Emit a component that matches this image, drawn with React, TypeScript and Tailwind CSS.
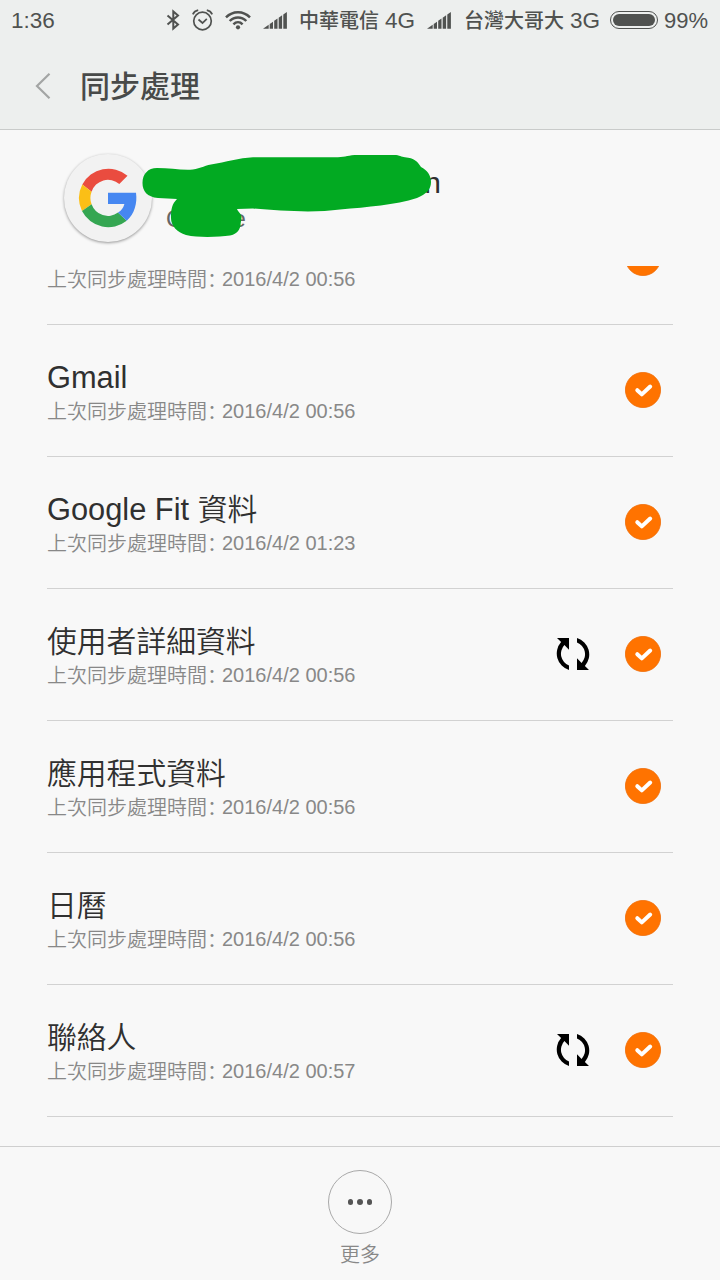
import React from "react";

type SyncItem = {
  title: string;
  time: string;
  syncing?: boolean;
};

const items: SyncItem[] = [
  { title: "Drive", time: "2016/4/2 00:56" },
  { title: "Gmail", time: "2016/4/2 00:56" },
  { title: "Google Fit 資料", time: "2016/4/2 01:23" },
  { title: "使用者詳細資料", time: "2016/4/2 00:56", syncing: true },
  { title: "應用程式資料", time: "2016/4/2 00:56" },
  { title: "日曆", time: "2016/4/2 00:56" },
  { title: "聯絡人", time: "2016/4/2 00:57", syncing: true },
];

const BluetoothIcon = () => (
  <svg width="14" height="22" viewBox="0 0 14 22" fill="none" stroke="#505250" strokeWidth="2">
    <path d="M1.5 6.5 L12 15.5 L7.3 19.5 V2.5 L12 6.5 L1.5 15.5" />
  </svg>
);

const AlarmIcon = () => (
  <svg width="21" height="22" viewBox="0 0 21 22" fill="none" stroke="#505250">
    <circle cx="10.5" cy="12" r="8.8" strokeWidth="1.7" />
    <path d="M6.5 10.5 L10.5 14 L14.8 9.8" strokeWidth="1.7" />
    <path d="M0.8 5.4 C1.8 3.2 3.8 1.7 6.2 1.2 M20.2 5.4 C19.2 3.2 17.2 1.7 14.8 1.2" strokeWidth="1.8" />
  </svg>
);

const WifiIcon = () => (
  <svg width="26" height="20" viewBox="0 0 26 20" fill="none" stroke="#505250" strokeWidth="2.5">
    <path d="M1 7.3 C7.8 0.4 18.2 0.4 25 7.3" />
    <path d="M4.7 11 C9.4 6.2 16.6 6.2 21.3 11" />
    <path d="M8.4 14.3 C11.1 11.6 14.9 11.6 17.6 14.3" />
    <circle cx="13" cy="17.3" r="2.1" fill="#505250" stroke="none" />
  </svg>
);

const SignalIcon = () => (
  <svg width="25" height="18" viewBox="0 0 25 18" fill="#505250">
    <path d="M0 17.8 L5.7 13.7 V17.8 Z" />
    <path d="M6.7 13 L10 10.7 V17.8 H6.7 Z" />
    <path d="M11.2 9.8 L14.5 7.5 V17.8 H11.2 Z" />
    <path d="M15.7 6.7 L19.1 4.3 V17.8 H15.7 Z" />
    <path d="M20.3 3.5 L23.9 1 V17.8 H20.3 Z" />
  </svg>
);

const GoogleLogo = () => (
  <svg width="60" height="60" viewBox="78 168 60 60">
    <path fill="#ea4c3f" d="M82.3 184.6 A29.5 29.5 0 0 1 127.5 175.7 L119.3 184 A17.2 17.2 0 0 0 91.6 191.7 Z" />
    <path fill="#fbbf16" d="M82.3 184.6 L91.6 191.7 A17.2 17.2 0 0 0 91.6 204.2 L82 211 A29.5 29.5 0 0 1 82.3 184.6 Z" />
    <path fill="#35a652" d="M82 211 L91.6 204.2 A17.2 17.2 0 0 0 118 212.6 L126.7 220.8 A29.5 29.5 0 0 1 82 211 Z" />
    <path fill="#4687f1" d="M126.7 220.8 L118 212.6 Q123 209.5 124.4 204 H108 V192.7 H136 C137.5 203 134.5 214 126.7 220.8 Z" />
  </svg>
);

const SyncIcon = () => (
  <svg width="36" height="36" viewBox="0 0 36 36" fill="#000">
    <path d="M14 34 A17.2 17.2 0 0 1 6.1 6.1 L2 2 H14 V13.7 L9.4 9.1 A12.6 12.6 0 0 0 14 29.5 Z" />
    <path d="M22 2 A17.2 17.2 0 0 1 29.9 29.9 L34 34 H22 V22.3 L26.6 26.9 A12.6 12.6 0 0 0 22 6.5 Z" />
  </svg>
);

const CheckIcon = () => (
  <svg width="36" height="36" viewBox="0 0 36 36" fill="none">
    <circle cx="18" cy="18" r="17.6" fill="#ff7300" stroke="#f06c05" strokeWidth="0.8" />
    <path d="M12.3 18.2 L16.8 22.4 L25.2 14.5" stroke="#fff" strokeWidth="4" strokeLinecap="round" strokeLinejoin="round" />
  </svg>
);

const StatusBar = () => (
  <div className="flex h-10 items-center pl-[11px] pr-3 text-[22.5px] text-[#505250]">
    <span className="mr-auto mt-px">1:36</span>
    <div className="flex items-center gap-3">
      <BluetoothIcon />
      <AlarmIcon />
      <WifiIcon />
      <SignalIcon />
      <span className="mt-px flex w-[115px] items-center justify-between whitespace-nowrap">
        <span className="-ml-px text-xl font-medium">中華電信</span>
        <span>4G</span>
      </span>
      <SignalIcon />
      <span className="mt-px flex w-[136px] items-center justify-between whitespace-nowrap">
        <span className="text-xl font-medium">台灣大哥大</span>
        <span>3G</span>
      </span>
    </div>
    <div className="ml-2.5 h-[18px] w-12 rounded-full border border-[#505250] p-[2px]">
      <div className="h-full rounded-full bg-[#505250]" />
    </div>
    <span className="ml-1.5 w-[44px] whitespace-nowrap text-[22px]">99%</span>
  </div>
);

const Account = () => (
  <div className="relative flex h-[136px] items-start pl-16 pt-6">
    <div className="flex size-[88px] items-center justify-center rounded-full bg-[#f2f2f2] shadow-[0_1px_3px_rgba(0,0,0,0.4)]">
      <GoogleLogo />
    </div>
    <div className="ml-[14px] w-[275px]">
      <div className="mt-[9px] text-right text-[30px] leading-10 text-[#303030]">n</div>
      <div className="text-2xl leading-8 tracking-[0.5px] text-[#666]">Google</div>
    </div>
    <svg className="absolute left-[140px] top-[20px]" width="300" height="90" viewBox="140 150 300 90">
      <path
        fill="#02aa22"
        d="M157 168 C169 168 179 170 190 169.700 C198 169.500 204 166 211 164.600 C226 162 239 158 253 157.300 L338 157.300 C346 157 348 155 358 155 L394 155 C400 155 401 157 405 157.300 C414 158 418 162 421 167 C427 170 431 175 431 182 C431 190 426 194 417 198 C395 205 368 207 340 209.500 C315 213 281 211 253 208.500 L237 209 C238 212 241 213 241.500 217 C241.500 220 240.500 222 240.500 226 C239 231 236 234.500 230 235.500 C219 237 199 238 186 235 C177 232 171 226 171 218 C171 209 172 204 177 199 L158 198 C147 197 142.500 191 142.500 183 C142.500 174 148 168 157 168 Z"
      />
    </svg>
  </div>
);

const SyncRow: React.FC<{ item: SyncItem }> = ({ item }) => (
  <div className="flex h-[132px] items-center border-b border-[#d2d2d2] pb-px pr-3">
    <div className="mt-[3px] flex-1 whitespace-nowrap">
      <div className="h-[38px] text-[29.8px] leading-[38px] text-[#303030]">
        {item.title.split(/([\x20-\x7e]+)/).map((part, i) => (
          <span key={i} className={i % 2 ? "text-[30.8px]" : ""}>
            {part}
          </span>
        ))}
      </div>
      <div className="flex h-7 text-xl leading-7 text-[#888]">
        <span className="mt-px">上次同步處理時間</span>
        <span className="w-[15px] font-['Noto_Sans_CJK_SC',sans-serif] tracking-[-5px]" lang="zh-CN">
          ：
        </span>
        <span>{item.time}</span>
      </div>
    </div>
    {item.syncing && (
      <div className="mr-[34px]">
        <SyncIcon />
      </div>
    )}
    <CheckIcon />
  </div>
);

const App = () => {
  return (
    <div
      lang="zh-TW"
      className="flex h-[1280px] w-[720px] flex-col overflow-hidden bg-[#f8f8f8] font-['Liberation_Sans','Noto_Sans_CJK_TC',sans-serif] font-[350]"
    >
      {/* header */}
      <header className="h-[130px] border-b border-[#c9cbca] bg-[#edefee]">
        <StatusBar />
        <div className="flex h-[92px] items-center pl-[35px]">
          <svg width="16" height="26" viewBox="0 0 16 26" fill="none" stroke="#a3a5a4" strokeWidth="2.2">
            <path d="M14.5 0.8 L2 13 L14.5 25.2" />
          </svg>
          <h1 className="ml-[29px] text-[30px] font-medium text-[#484a49]">同步處理</h1>
        </div>
      </header>

      <Account />

      {/* list, scrolled part way through its first row */}
      <main className="h-[880px] overflow-hidden px-[47px]">
        <div className="-mt-[73px]">
          {items.map((item) => (
            <SyncRow key={item.title} item={item} />
          ))}
        </div>
      </main>

      {/* footer */}
      <footer className="flex h-[134px] flex-col items-center border-t border-[#cfcfcf] pt-[23px]">
        <button className="flex size-16 items-center justify-center gap-1 rounded-full border border-[#a9a9a9]">
          <span className="size-[5.5px] rounded-full bg-[#555]" />
          <span className="size-[5.5px] rounded-full bg-[#555]" />
          <span className="size-[5.5px] rounded-full bg-[#555]" />
        </button>
        <span className="mt-[7px] text-xl leading-7 text-[#888]">更多</span>
      </footer>
    </div>
  );
};

export default App;
